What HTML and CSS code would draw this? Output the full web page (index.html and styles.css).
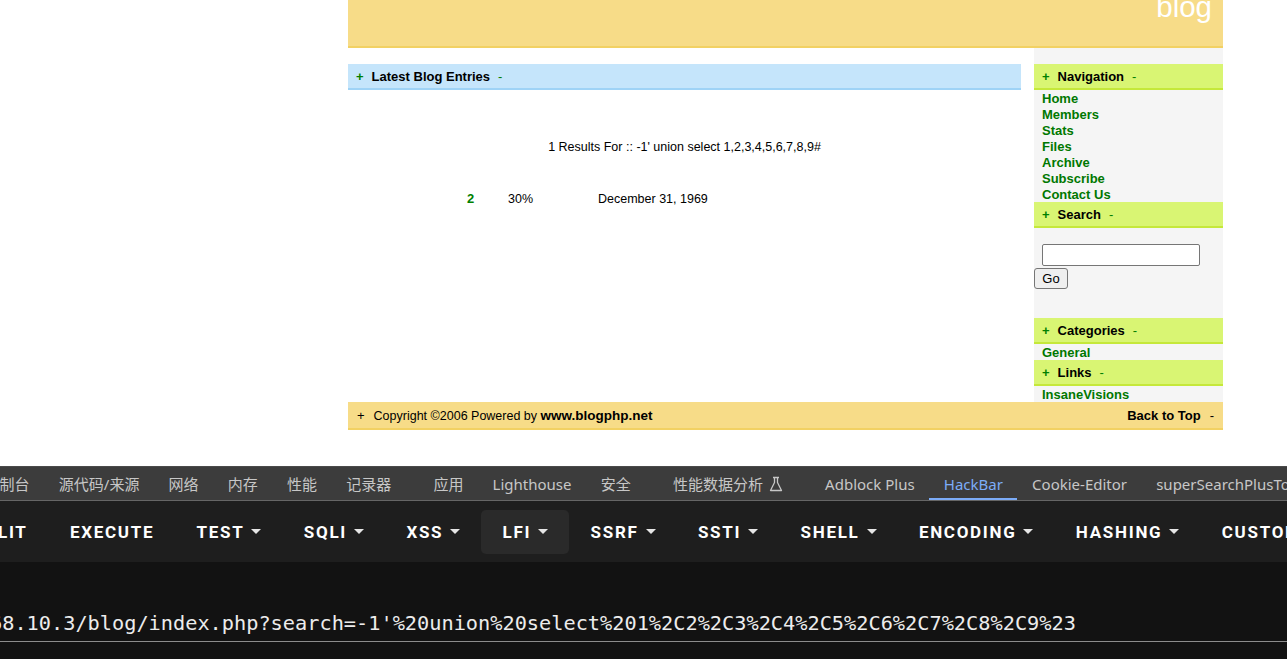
FILE: index.html
```html
<!DOCTYPE html>
<html>
<head>
<meta charset="utf-8">
<title>blog</title>
<link rel="stylesheet" href="styles.css">
</head>
<body>
<div class="viewport">
  <div class="site">
    <div class="masthead"><span class="blogtitle">blog</span></div>
    <div class="columns">
      <div class="main">
        <div class="boxhead blue"><span class="plus">+</span>Latest Blog Entries<span class="minus">-</span></div>
        <div class="results">1 Results For :: -1' union select 1,2,3,4,5,6,7,8,9#</div>
        <div class="entry"><span class="num">2</span><span>30%</span><span>December 31, 1969</span></div>
      </div>
      <div class="sidebar">
        <div class="boxhead green"><span class="plus">+</span>Navigation<span class="minus">-</span></div>
        <ul class="links">
          <li><a href="#">Home</a></li>
          <li><a href="#">Members</a></li>
          <li><a href="#">Stats</a></li>
          <li><a href="#">Files</a></li>
          <li><a href="#">Archive</a></li>
          <li><a href="#">Subscribe</a></li>
          <li><a href="#">Contact Us</a></li>
        </ul>
        <div class="boxhead green"><span class="plus">+</span>Search<span class="minus">-</span></div>
        <form class="searchform">
          <input class="searchinput" type="text">
          <button class="gobtn" type="button">Go</button>
        </form>
        <div class="boxhead green"><span class="plus">+</span>Categories<span class="minus">-</span></div>
        <ul class="links"><li><a href="#">General</a></li></ul>
        <div class="boxhead green"><span class="plus">+</span>Links<span class="minus">-</span></div>
        <ul class="links"><li><a href="#">InsaneVisions</a></li></ul>
      </div>
    </div>
    <div class="footer">
      <div class="footleft"><span class="fplus">+</span>Copyright ©2006 Powered by <b>www.blogphp.net</b></div>
      <div class="footright">Back to Top<span class="fminus">-</span></div>
    </div>
  </div>
</div>
<div class="devtools">
  <div class="tabbar">
    <span class="tab first">控制台</span>
    <span class="tab">源代码/来源</span>
    <span class="tab">网络</span>
    <span class="tab">内存</span>
    <span class="tab">性能</span>
    <span class="tab">记录器</span>
    <span class="tab gap">应用</span>
    <span class="tab">Lighthouse</span>
    <span class="tab">安全</span>
    <span class="tab gap">性能数据分析<svg class="flask" width="14" height="16" viewBox="0 0 14 16"><path d="M4 1.5h6M5.5 1.5v5L1.5 14.5h11L8.5 6.5v-5" fill="none" stroke="#c7c7c7" stroke-width="1.3" stroke-linejoin="round"/></svg></span>
    <span class="tab gap">Adblock Plus</span>
    <span class="tab active">HackBar</span>
    <span class="tab">Cookie-Editor</span>
    <span class="tab">superSearchPlusTools</span>
  </div>
  <div class="toolbar">
    <span class="btn first">SPLIT</span>
    <span class="btn">EXECUTE</span>
    <span class="btn">TEST<i class="caret"></i></span>
    <span class="btn">SQLI<i class="caret"></i></span>
    <span class="btn">XSS<i class="caret"></i></span>
    <span class="btn hover">LFI<i class="caret"></i></span>
    <span class="btn">SSRF<i class="caret"></i></span>
    <span class="btn">SSTI<i class="caret"></i></span>
    <span class="btn">SHELL<i class="caret"></i></span>
    <span class="btn">ENCODING<i class="caret"></i></span>
    <span class="btn">HASHING<i class="caret"></i></span>
    <span class="btn">CUSTOM<i class="caret"></i></span>
  </div>
  <div class="urlarea">
    <div class="urlfield"><span class="urltext">68.10.3/blog/index.php?search=-1'%20union%20select%201%2C2%2C3%2C4%2C5%2C6%2C7%2C8%2C9%23</span></div>
  </div>
</div>
</body>
</html>
```
FILE: styles.css
```css
html, body {
  margin: 0;
  padding: 0;
  background: #fff;
  overflow: hidden;
}

.viewport {
  height: 466px;
  overflow: hidden;
  background: #fff;
}

.site {
  width: 875px;
  margin-left: 348px;
  font-family: "Liberation Sans", Arial, sans-serif;
  font-size: 12.5px;
  color: #000;
}

.masthead {
  height: 46px;
  background: #f7dc88;
  border-bottom: 2px solid #f2d163;
  text-align: right;
  overflow: hidden;
}

.blogtitle {
  display: block;
  color: #fff;
  font-size: 29.5px;
  line-height: 29px;
  margin-top: -8px;
  padding-right: 11px;
}

.columns {
  display: flex;
  justify-content: space-between;
}

.main {
  width: 673px;
  padding-top: 16px;
}

.sidebar {
  width: 189px;
  padding-top: 16px;
  background: #f5f5f5;
}

.boxhead {
  height: 24px;
  line-height: 26px;
  font-size: 13px;
  font-weight: bold;
  white-space: nowrap;
  overflow: visible;
}

.boxhead.blue {
  background: #c5e5fb;
  border-bottom: 2px solid #9fd3f6;
  padding-left: 8px;
}

.boxhead.green {
  background: #d9f573;
  border-bottom: 2px solid #c5e83a;
  padding-left: 8px;
}

.plus {
  color: #008000;
  margin-right: 8px;
}

.minus {
  color: #008000;
  font-weight: normal;
  margin-left: 8px;
}

.links {
  list-style: none;
  margin: 0;
  padding: 0 0 0 8px;
}

.links li {
  height: 16px;
  line-height: 18px;
}

.links a {
  color: #007800;
  font-weight: bold;
  font-size: 13px;
  text-decoration: none;
}

.searchform {
  margin: 0;
  padding: 16px 0 29px;
}

.searchinput {
  display: block;
  box-sizing: border-box;
  width: 158px;
  height: 22px;
  margin: 0 0 2px 8px;
  border: 1px solid #767676;
  border-radius: 2px;
  background: #fff;
  padding: 0 3px;
}

.gobtn {
  display: block;
  box-sizing: border-box;
  height: 21px;
  width: 34px;
  padding: 0;
  border: 1px solid #767676;
  border-radius: 3px;
  background: #efefef;
  font-family: "Liberation Sans", Arial, sans-serif;
  font-size: 13px;
  color: #000;
}

.results {
  text-align: center;
  margin-top: 50px;
  line-height: 14px;
}

.entry {
  display: grid;
  grid-template-columns: 41px 90px auto;
  padding-left: 119px;
  margin-top: 38px;
  line-height: 14px;
}

.entry .num {
  color: #008000;
  font-weight: bold;
  font-size: 13px;
}

.footer {
  height: 26px;
  line-height: 28px;
  background: #f7dc88;
  border-bottom: 2px solid #f2d163;
  display: flex;
  justify-content: space-between;
  padding: 0 9px;
  white-space: nowrap;
  overflow: visible;
}

.footer b {
  font-size: 13.5px;
}

.fplus {
  font-size: 13px;
  margin-right: 9px;
}

.footright {
  font-weight: bold;
  font-size: 13px;
}

.fminus {
  font-weight: normal;
  margin-left: 9px;
}

/* devtools */
.devtools {
  height: 193px;
  background: #121212;
  overflow: hidden;
}

.tabbar {
  display: flex;
  height: 33px;
  background: #3c3c3c;
  border-top: 1px solid #4a4a4a;
  border-bottom: 1px solid #666;
  font-family: "Noto Sans", "Noto Sans CJK SC", sans-serif;
  font-size: 15px;
  color: #c7c7c7;
  white-space: nowrap;
  overflow: hidden;
}

.tab {
  display: flex;
  align-items: center;
  padding: 0 14.6px;
  height: 33px;
  box-sizing: border-box;
  flex: none;
}

.tab.first {
  margin-left: -30px;
}

.tab.gap {
  margin-left: 13px;
}

.tab.active {
  color: #7cacf8;
  border-bottom: 2px solid #7cacf8;
  padding-top: 2px;
}

.flask {
  margin-left: 6px;
}

.toolbar {
  display: flex;
  align-items: center;
  height: 61px;
  background: #1e1e1e;
  font-family: Roboto, "Noto Sans", sans-serif;
  font-weight: bold;
  font-size: 17px;
  letter-spacing: 1.7px;
  color: #fff;
  white-space: nowrap;
  overflow: hidden;
}

.btn {
  display: flex;
  align-items: center;
  height: 44px;
  padding: 0 21.2px;
  border-radius: 5px;
  flex: none;
}

.btn.first {
  margin-left: -48px;
}

.btn.hover {
  background: #2a2a2a;
}

.caret {
  display: inline-block;
  width: 0;
  height: 0;
  margin-left: 7px;
  border-left: 5px solid transparent;
  border-right: 5px solid transparent;
  border-top: 5px solid #e6e6e6;
}

.urlarea {
  height: 97px;
  overflow: hidden;
}

.urlfield {
  margin-top: 49px;
  padding-bottom: 6px;
  border-bottom: 1px solid #8c8c8c;
  line-height: 24px;
  height: 24px;
  font-family: "DejaVu Sans Mono", monospace;
  font-size: 20.28px;
  color: #ececec;
  white-space: nowrap;
  overflow: hidden;
}

.urltext {
  display: block;
  margin-left: -10px;
}
```
